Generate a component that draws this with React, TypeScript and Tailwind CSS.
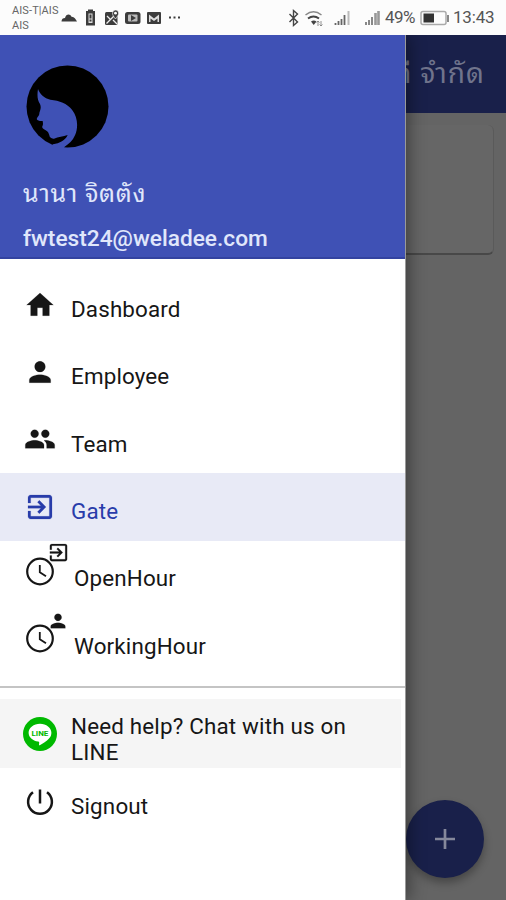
import React from 'react';

const EXIT_PATH =
  'M10.09 15.59L11.5 17l5-5-5-5-1.41 1.41L12.67 11H3v2h9.67l-2.58 2.59zM19 3H5c-1.11 0-2 .9-2 2v4h2V5h14v14H5v-4H3v4c0 1.1.89 2 2 2h14c1.1 0 2-.9 2-2V5c0-1.1-.9-2-2-2z';
const PERSON_PATH =
  'M12 12c2.21 0 4-1.79 4-4s-1.79-4-4-4-4 1.79-4 4 1.79 4 4 4zm0 2c-2.67 0-8 1.34-8 4v2h16v-2c0-2.66-5.33-4-8-4z';
const HOME_PATH = 'M10 20v-6h4v6h5v-8h3L12 3 2 12h3v8z';
const TEAM_PATH =
  'M16 11c1.66 0 2.99-1.34 2.99-3S17.66 5 16 5c-1.66 0-3 1.34-3 3s1.34 3 3 3zm-8 0c1.66 0 2.99-1.34 2.99-3S9.66 5 8 5C6.34 5 5 6.34 5 8s1.34 3 3 3zm0 2c-2.33 0-7 1.17-7 3.5V19h14v-2.5c0-2.33-4.67-3.5-7-3.5zm8 0c-.29 0-.62.02-.97.05 1.16.84 1.97 1.97 1.97 3.45V19h6v-2.5c0-2.33-4.67-3.5-7-3.5z';

const Glyph: React.FC<{ d: string; className?: string }> = ({ d, className = 'w-8 h-8' }) => (
  <svg className={className} viewBox="0 0 24 24" fill="currentColor" stroke="currentColor" strokeWidth=".15">
    <path d={d} />
  </svg>
);

const ClockIcon: React.FC<{ badge: string; badgeClass: string }> = ({ badge, badgeClass }) => (
  <span className="relative block w-8 h-8 mb-[5px]">
    <svg className="w-8 h-8" viewBox="0 0 32 32" fill="none" stroke="currentColor">
      <circle cx="16" cy="15.5" r="12.8" strokeWidth="2.2" />
      <path d="M15.8 9v7.300l6.200 4" strokeWidth="1.8" />
    </svg>
    <Glyph d={badge} className={badgeClass} />
  </span>
);

const LineIcon = () => (
  <svg className="w-[34px] h-[34px]" viewBox="0 0 34 34">
    <circle cx="17" cy="17" r="17" fill="#00b900" />
    <path d="M17 6.7c-6.3 0-11.4 4-11.4 9 0 4.400 4 8.100 9.500 8.800 1.400.3 1.200.9.900 3.200-.1.700.6.700 1.200.4 2.500-1.300 6.500-4 8.800-6.500 1.600-1.700 2.400-3.700 2.400-5.900 0-5-5.100-9-11.400-9z" fill="#fff" />
    <text x="17" y="19" textAnchor="middle" textLength="17" fontFamily="Roboto, sans-serif" fontSize="8" fontWeight="700" fill="#00b900">LINE</text>
  </svg>
);

const PowerIcon = () => (
  <svg className="w-8 h-8" viewBox="0 0 32 32" fill="none" stroke="currentColor" strokeWidth="2.5">
    <path d="M16 3.500v14" />
    <path d="M9 6.300a11.900 11.900 0 1 0 14 0" />
  </svg>
);

const Avatar = () => (
  <svg className="w-[83px] h-[83px]" viewBox="79 73 249 249">
    <circle cx="203.500" cy="197.500" r="123" fill="#000" />
    <path
      d="M115 145C120 159 134 174 152 177C180 180 202 188 217 207C235 230 236 261 226 284C219 300 208 310 194 319L192 326L150 326L160 311C180 308 197 299 204 283C190 287 176 289 163 294C155 295 149 290 149 284C147 277 145 272 138 269C132 266 126 263 128 257C131 252 130 247 129 241C122 242 113 240 111 235C113 228 120 225 119 217C121 209 126 201 121 190C113 179 112 163 115 145Z"
      fill="#3f51b5"
    />
  </svg>
);

const StatusBar = () => (
  <div className="h-[35px] shrink-0 bg-[#fcfcfc] flex items-center text-[#555]">
    <div className="ml-3 w-[49px] text-[11px] leading-[15px] whitespace-nowrap tracking-[0.1px] text-[#666]">
      <div>AIS-T|AIS</div>
      <div>AIS</div>
    </div>
    {/* Notifications */}
    <svg className="w-[120px] h-5" viewBox="0 0 120 20" fill="#3c3c3c">
      <path d="M.5 13.500c0-2.500 1.500-3.500 3.500-3.500 1-4 5-4.500 6.500-1.300 2.800-.2 4 2 5.500 4.800z" />
      <path d="M27 1.500h5V3h2v14.500h-9V3h2z" />
      <path d="M27.500 5.500h4v9.500h-4z" fill="#ddd" />
      <path d="M28.500 6.500h2v4h-2zM28.500 11.500h2v2h-2z" />
      <rect x="44" y="4" width="12.500" height="13" rx="1.500" />
      <path d="M45.500 15.500l8-8M46 8l3 3M52 12l4 4" stroke="#eee" strokeWidth="1.300" />
      <path d="M54.500 11c-3-4-3.500-5-2.500-7.500 1.300-2 4-2 5.200 0 1 2.500.3 3.500-2.700 7.500z" stroke="#fcfcfc" strokeWidth=".7" />
      <circle cx="54.500" cy="5.200" r="1.400" fill="#fff" />
      <rect x="64" y="4" width="15.500" height="12" rx="2.500" />
      <rect x="67" y="6.500" width="9.500" height="7" rx="1" fill="#bbb" />
      <path d="M70 7v6l5-3z" />
      <rect x="86" y="4" width="14" height="12" rx="1" />
      <path d="M88 14V6.500l5 4 5-4V14z" fill="#ddd" />
      <path d="M89.500 14v-3.500l3.500 2.500 3.500-2.500V14z" />
      <path d="M108 8.500h2v2h-2zM112.500 8.500h2v2h-2zM117 8.500h2v2h-2z" />
    </svg>
    {/* Connectivity */}
    <svg className="ml-auto w-[98px] h-5" viewBox="0 0 98 20" fill="none" stroke="#444">
      <path d="M2.500 6l8 8-4 3.500V2.500l4 3.500-8 8" strokeWidth="1.400" />
      <path d="M18.500 7c5-4 11-4 16 0" stroke="#888" strokeWidth="1.500" />
      <path d="M21 10.500c4-3 7-3 11 0" strokeWidth="2" />
      <path d="M24 13.500c2-1.500 3.500-1.500 5.500 0L26.700 17z" fill="#444" stroke="none" />
      <path d="M31 13v5m-1.500-3.500l1.500-1.500 1.500 1.500M34 13v5m-1.500-1.500l1.500 1.500 1.500-1.500" stroke="#777" strokeWidth=".8" />
      <path d="M48.500 17v-2M51.500 17v-4M54.500 17v-6M57.500 17V7" stroke="#666" strokeWidth="1.800" />
      <path d="M61.500 17V3" stroke="#bbb" strokeWidth="2" />
      <path d="M79 17v-3M82 17v-5M85 17v-8" stroke="#888" strokeWidth="2" />
      <path d="M88.500 17V5M91.500 17V3" stroke="#999" strokeWidth="2.600" />
    </svg>
    <span className="w-[33px] text-[17px] whitespace-nowrap tracking-[-0.6px]">49%</span>
    <svg className="ml-[2px] w-[31px] h-4" viewBox="0 0 31 16">
      <rect x="1" y="1.500" width="25" height="13" rx="2" fill="none" stroke="#aaa" strokeWidth="1.500" />
      <rect x="3.500" y="3.500" width="10.500" height="9" fill="#333" />
      <path d="M28 5v7" stroke="#888" strokeWidth="2" />
    </svg>
    <span className="ml-[2px] mr-[11px] w-[42px] text-[17px] whitespace-nowrap tracking-[-0.2px]">13:43</span>
  </div>
);

interface MenuItem {
  label: string;
  icon: React.ReactNode;
  active?: boolean;
  indent?: boolean;
}

const items: MenuItem[] = [
  { label: 'Dashboard', icon: <Glyph d={HOME_PATH} /> },
  { label: 'Employee', icon: <Glyph d={PERSON_PATH} /> },
  { label: 'Team', icon: <Glyph d={TEAM_PATH} /> },
  { label: 'Gate', icon: <Glyph d={EXIT_PATH} />, active: true },
  {
    label: 'OpenHour',
    icon: <ClockIcon badge={EXIT_PATH} badgeClass="absolute left-[23px] -top-[15px] w-[23px] h-[23px]" />,
    indent: true,
  },
  {
    label: 'WorkingHour',
    icon: <ClockIcon badge={PERSON_PATH} badgeClass="absolute left-[23px] -top-[13px] w-[22px] h-[22px]" />,
    indent: true,
  },
];

const Drawer = () => (
  <aside className="relative w-[406px] shrink-0 bg-white flex flex-col border-r border-[#999] shadow-[3px_0_16px_rgba(0,0,0,0.4)]">
    {/* Profile */}
    <div className="h-[224px] shrink-0 bg-[#3f51b5] border-b-2 border-[#3343a0] pl-[23px] pt-[30px] text-[#e0e7fb]">
      <div className="ml-[3px]">
        <Avatar />
      </div>
      <div className="mt-[28px] h-9 leading-9 text-[25px] tracking-[0.7px]">นานา จิตตัง</div>
      <div className="mt-[13px] h-7 leading-7 text-[22.7px] font-medium">fwtest24@weladee.com</div>
    </div>

    {/* Navigation */}
    <nav className="pt-3">
      {items.map((item) => (
        <div
          key={item.label}
          className={`h-[67.4px] pl-6 flex items-center ${item.active ? 'bg-[#e8eaf6] text-[#283caa]' : 'text-[#161616]'}`}
        >
          {item.icon}
          <span className={`pt-[10px] text-[22.4px] font-[450] tracking-[0.15px] ${item.indent ? 'ml-[18px]' : 'ml-[15px]'}`}>
            {item.label}
          </span>
        </div>
      ))}
    </nav>

    <div className="mt-[11px] border-t-2 border-[#c4c4c4]"></div>

    {/* Support */}
    <div className="mt-[11px] text-[#161616] text-[22.4px] font-[450] tracking-[0.18px]">
      <div className="h-[69px] mr-1 pl-[23px] flex items-center bg-[#f5f5f5]">
        <LineIcon />
        <p className="ml-[14px] pt-[10px] w-[300px] leading-[26px]">Need help? Chat with us on LINE</p>
      </div>
      <div className="h-[67px] pl-6 flex items-center">
        <PowerIcon />
        <span className="ml-[15px] pt-[10px]">Signout</span>
      </div>
    </div>
  </aside>
);

const Page = () => (
  <div className="flex-1 min-w-0 flex flex-col bg-[#646464]">
    <div className="h-[78px] shrink-0 flex items-center justify-end bg-[#19204a] pr-[21px] text-[28px] tracking-[1px] whitespace-nowrap text-[#70748c]">
      เวลาดี จำกัด
    </div>
    <div className="mt-3 h-[130px] mr-[12px] rounded-r-md bg-[#666] border-r border-b-2 border-r-[#5a5a5a] border-b-[#484848]"></div>
    <div className="mt-auto mb-[22px] mr-[22px] self-end w-[78px] h-[78px] rounded-full bg-[#19204a] shadow-[0_5px_9px_rgba(0,0,0,0.3)] flex items-center justify-center shrink-0">
      <svg className="w-5 h-5" viewBox="0 0 20 20" stroke="#85889b" strokeWidth="2.7">
        <path d="M10 0v20M0 10h20" />
      </svg>
    </div>
  </div>
);

const App: React.FC = () => (
  <div className="w-[506px] h-[900px] overflow-hidden flex flex-col font-[Roboto,'Noto_Sans_Thai_Looped','Noto_Sans_Thai','Noto_Sans',sans-serif]">
    <StatusBar />
    <div className="flex-1 min-h-0 flex overflow-hidden">
      <Drawer />
      <Page />
    </div>
  </div>
);

export default App;
